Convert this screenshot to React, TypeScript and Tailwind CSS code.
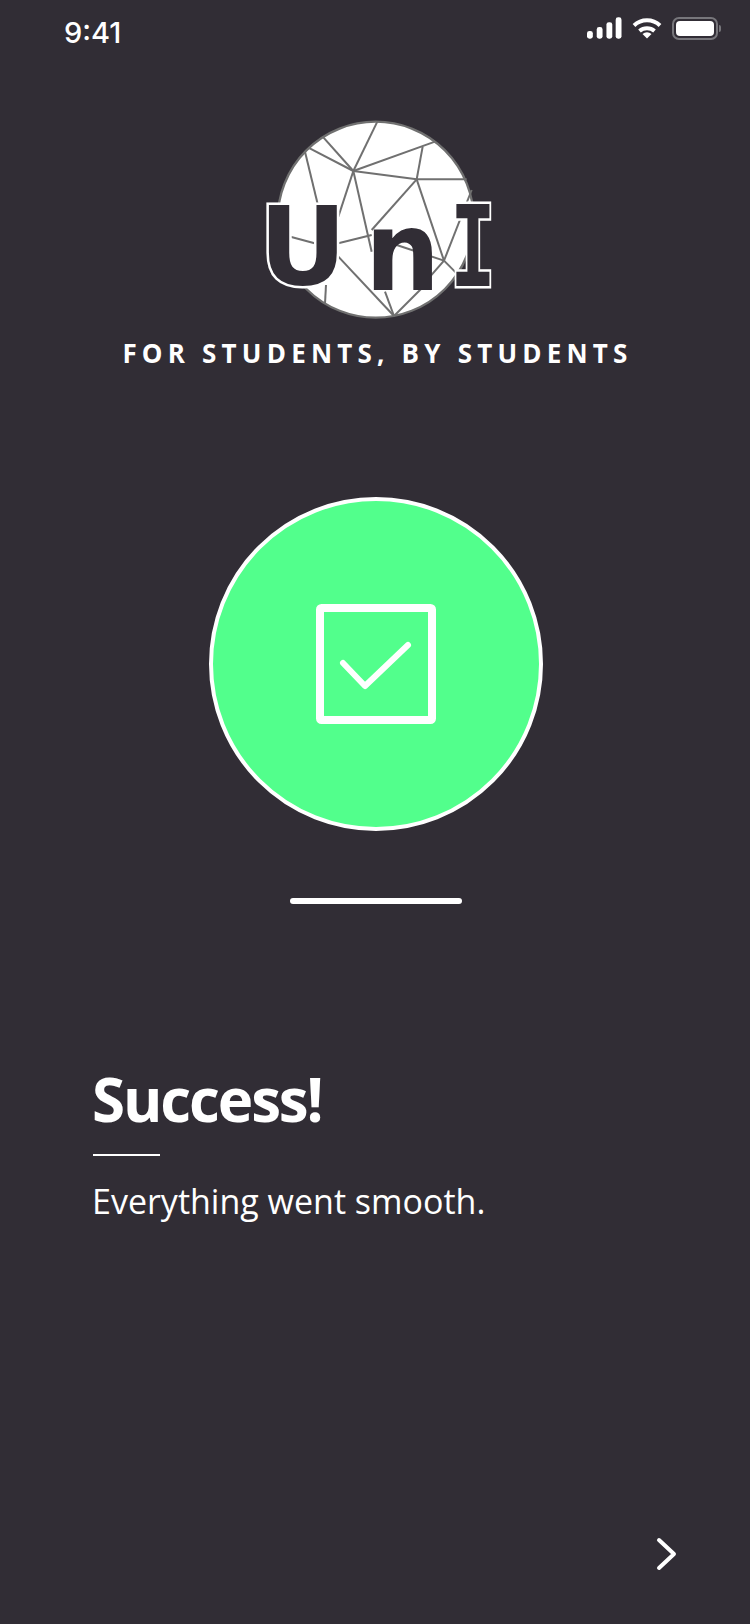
const lines = [
  [412, 65, 340, 213], [250, 112, 340, 213], [205, 143, 340, 213], [585, 125, 340, 213],
  [340, 213, 530, 238], [530, 238, 680, 238], [548, 140, 530, 238], [195, 155, 235, 320],
  [340, 213, 295, 350], [340, 213, 395, 455], [530, 238, 395, 390], [530, 238, 612, 482],
  [612, 482, 695, 270], [612, 482, 650, 520], [612, 482, 570, 530], [295, 430, 395, 405],
  [143, 408, 232, 432], [470, 435, 612, 482], [295, 470, 462, 648], [462, 648, 570, 540],
  [462, 648, 435, 575], [258, 555, 255, 610],
];

function Logo() {
  return (
    <div className="relative h-[230px] w-[270px] shrink-0 self-center">
      <svg viewBox="0 0 810 690" className="h-[230px] w-[270px]">
        <circle cx="407" cy="359" r="294" fill="#ffffff" stroke="#707070" strokeWidth="7" />
        {lines.map(([a, b, c, d], i) => (
          <line key={i} x1={a} y1={b} x2={c} y2={d} stroke="#707070" strokeWidth="6" />
        ))}
      </svg>
      <span className="absolute left-[19px] top-[83px] font-['DejaVu_Sans'] text-[108px] font-bold leading-[128px] text-[#312d35] [-webkit-text-stroke:5px_white] [paint-order:stroke_fill]">
        U
      </span>
      <span className="absolute left-[125px] top-[88px] origin-left scale-x-[0.96] font-['DejaVu_Sans'] text-[110px] font-bold leading-[128px] text-[#312d35]">
        n
      </span>
      <span className="absolute left-[210px] top-[83px] origin-left scale-x-[0.68] font-['DejaVu_Sans_Mono'] text-[112px] font-bold leading-[128px] text-[#312d35] [-webkit-text-stroke:5px_white] [paint-order:stroke_fill]">
        I
      </span>
    </div>
  );
}

function StatusBar() {
  return (
    <div className="flex h-[100px] shrink-0 items-start justify-between pl-[64px] pr-[29px] pt-[15px]">
      <span className="font-['Inter'] text-[29px] font-medium leading-[36px] text-white">9:41</span>
      <div className="flex items-start gap-[10px] pt-[2px]">
        <svg width="35" height="22" viewBox="0 0 36 22" fill="#ffffff">
          <rect x="0" y="14" width="6" height="8" rx="2.5" />
          <rect x="10" y="10" width="6" height="12" rx="2.5" />
          <rect x="20" y="5" width="6" height="17" rx="2.5" />
          <rect x="29.5" y="0" width="6" height="22" rx="2.5" />
        </svg>
        <svg width="30" height="22" viewBox="0 0 30 22" fill="none" stroke="#ffffff">
          <path d="M2 8.5 A19 19 0 0 1 28 8.5" strokeWidth="4" />
          <path d="M7.5 14 A11.5 11.5 0 0 1 22.5 14" strokeWidth="4" />
          <path d="M15 21.5 L10.5 17 A7 7 0 0 1 19.5 17 Z" fill="#ffffff" stroke="none" />
        </svg>
        <div className="flex items-center gap-[1px]">
          <div className="flex h-[23px] w-[46px] rounded-[7px] border-2 border-[#77767b] p-[2px]">
            <div className="flex-1 rounded-[4px] bg-white" />
          </div>
          <div className="h-[7px] w-[2px] rounded-r-full bg-[#77767b]" />
        </div>
      </div>
    </div>
  );
}

export default function App() {
  return (
    <div className="flex h-[1624px] w-[750px] flex-col overflow-hidden bg-[#312d35] text-white">
      <StatusBar />
      <Logo />
      <p className="mt-[5px] whitespace-nowrap pl-[5px] text-center font-['Open_Sans'] text-[26px] font-bold leading-[36px] tracking-[5.2px]">
        FOR STUDENTS, BY STUDENTS
      </p>
      <div className="ml-[2px] mt-[126px] flex h-[334px] w-[334px] shrink-0 items-center justify-center self-center rounded-full border-4 border-white bg-[#52ff8c]">
        <svg width="120" height="120" viewBox="0 0 120 120" fill="none" stroke="#ffffff">
          <rect x="4" y="4" width="112" height="112" rx="1.5" strokeWidth="8" strokeLinejoin="round" />
          <path d="M27 59 L49 82 L92 41" strokeWidth="6" strokeLinecap="round" strokeLinejoin="round" />
        </svg>
      </div>
      <div className="ml-[2px] mt-[67px] h-[6px] w-[172px] shrink-0 self-center rounded-full bg-white" />
      <div className="flex flex-col pl-[93px] pt-[154px]">
        <h1 className="ml-[-1px] font-['Open_Sans'] text-[60px] font-bold leading-[82px] tracking-[-2.1px]">Success!</h1>
        <div className="mt-[14px] h-[2px] w-[67px] bg-white" />
        <p className="ml-[-1px] mt-[21px] font-['Open_Sans'] text-[34px] font-normal leading-[48px]">Everything went smooth.</p>
      </div>
      <div className="mt-auto flex justify-end pb-[53px] pr-[71px]">
        <svg width="24" height="34" viewBox="0 0 24 34" fill="none" stroke="#ffffff" strokeWidth="4" strokeLinecap="round" strokeLinejoin="round">
          <path d="M4 3 L19 17 L4 31" />
        </svg>
      </div>
    </div>
  );
}
